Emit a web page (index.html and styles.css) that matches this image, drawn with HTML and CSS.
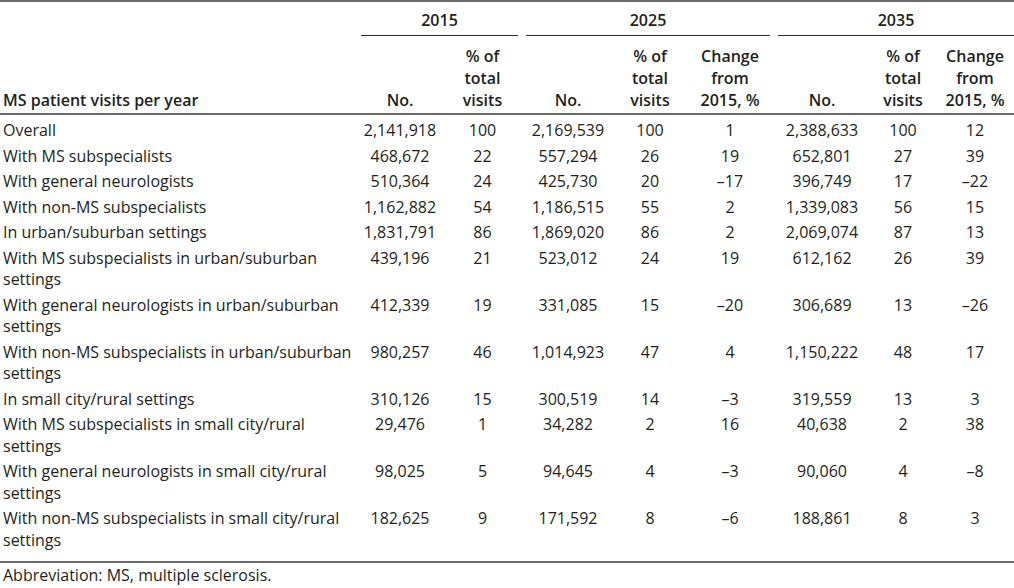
FILE: index.html
```html
<!DOCTYPE html>
<html lang="en">
<head>
<meta charset="utf-8">
<title>MS patient visits per year</title>
<link rel="stylesheet" href="styles.css">
</head>
<body>
<table class="data">
  <colgroup>
    <col class="c-label">
    <col class="c-no15">
    <col class="c-pct15">
    <col class="c-no25">
    <col class="c-pct25">
    <col class="c-ch25">
    <col class="c-no35">
    <col class="c-pct35">
    <col class="c-ch35">
  </colgroup>
  <thead>
    <tr class="h-group">
      <th class="h-label" rowspan="2">MS patient visits per year</th>
      <th class="group" colspan="2"><div class="grp">2015</div></th>
      <th class="group" colspan="3"><div class="grp">2025</div></th>
      <th class="group last" colspan="3"><div class="grp">2035</div></th>
    </tr>
    <tr class="h-cols">
      <th>No.</th>
      <th>% of<br>total<br>visits</th>
      <th>No.</th>
      <th>% of<br>total<br>visits</th>
      <th>Change<br>from<br>2015, %</th>
      <th>No.</th>
      <th>% of<br>total<br>visits</th>
      <th>Change<br>from<br>2015, %</th>
    </tr>
  </thead>
  <tbody>
    <tr>
      <td class="label">Overall</td>
      <td>2,141,918</td><td>100</td>
      <td>2,169,539</td><td>100</td><td>1</td>
      <td>2,388,633</td><td>100</td><td>12</td>
    </tr>
    <tr>
      <td class="label">With MS subspecialists</td>
      <td>468,672</td><td>22</td>
      <td>557,294</td><td>26</td><td>19</td>
      <td>652,801</td><td>27</td><td>39</td>
    </tr>
    <tr>
      <td class="label">With general neurologists</td>
      <td>510,364</td><td>24</td>
      <td>425,730</td><td>20</td><td>–17</td>
      <td>396,749</td><td>17</td><td>–22</td>
    </tr>
    <tr>
      <td class="label">With non-MS subspecialists</td>
      <td>1,162,882</td><td>54</td>
      <td>1,186,515</td><td>55</td><td>2</td>
      <td>1,339,083</td><td>56</td><td>15</td>
    </tr>
    <tr>
      <td class="label">In urban/suburban settings</td>
      <td>1,831,791</td><td>86</td>
      <td>1,869,020</td><td>86</td><td>2</td>
      <td>2,069,074</td><td>87</td><td>13</td>
    </tr>
    <tr>
      <td class="label">With MS subspecialists in urban/suburban<br>settings</td>
      <td>439,196</td><td>21</td>
      <td>523,012</td><td>24</td><td>19</td>
      <td>612,162</td><td>26</td><td>39</td>
    </tr>
    <tr>
      <td class="label">With general neurologists in urban/suburban<br>settings</td>
      <td>412,339</td><td>19</td>
      <td>331,085</td><td>15</td><td>–20</td>
      <td>306,689</td><td>13</td><td>–26</td>
    </tr>
    <tr>
      <td class="label">With non-MS subspecialists in urban/suburban<br>settings</td>
      <td>980,257</td><td>46</td>
      <td>1,014,923</td><td>47</td><td>4</td>
      <td>1,150,222</td><td>48</td><td>17</td>
    </tr>
    <tr>
      <td class="label">In small city/rural settings</td>
      <td>310,126</td><td>15</td>
      <td>300,519</td><td>14</td><td>–3</td>
      <td>319,559</td><td>13</td><td>3</td>
    </tr>
    <tr>
      <td class="label">With MS subspecialists in small city/rural<br>settings</td>
      <td>29,476</td><td>1</td>
      <td>34,282</td><td>2</td><td>16</td>
      <td>40,638</td><td>2</td><td>38</td>
    </tr>
    <tr>
      <td class="label">With general neurologists in small city/rural<br>settings</td>
      <td>98,025</td><td>5</td>
      <td>94,645</td><td>4</td><td>–3</td>
      <td>90,060</td><td>4</td><td>–8</td>
    </tr>
    <tr>
      <td class="label">With non-MS subspecialists in small city/rural<br>settings</td>
      <td>182,625</td><td>9</td>
      <td>171,592</td><td>8</td><td>–6</td>
      <td>188,861</td><td>8</td><td>3</td>
    </tr>
  </tbody>
</table>
<p class="note">Abbreviation: MS, multiple sclerosis.</p>
</body>
</html>
```

FILE: styles.css
```css
html, body {
  margin: 0;
  padding: 0;
  background: #ffffff;
}

body {
  font-family: "Open Sans", "Noto Sans", sans-serif;
  font-size: 16px;
  color: #231f20;
}

.data {
  width: 1014px;
  border-collapse: collapse;
  table-layout: fixed;
  border-top: 2px solid #6a6a6a;
}

.c-label { width: 357px; }
.c-no15 { width: 86px; }
.c-pct15 { width: 79px; }
.c-no25 { width: 92px; }
.c-pct25 { width: 72px; }
.c-ch25 { width: 88px; }
.c-no35 { width: 96px; }
.c-pct35 { width: 66px; }
.c-ch35 { width: 78px; }

th {
  font-weight: 600;
  line-height: 22px;
  text-align: center;
  vertical-align: bottom;
}

.h-group .group {
  padding: 7px 4px 0 4px;
}

.h-group .group.last {
  padding-right: 0;
}

.grp {
  border-bottom: 1px solid #2a2a2a;
  padding-bottom: 4px;
}

.h-label {
  text-align: left;
  padding: 0 4px 2px 3px;
  white-space: nowrap;
}

.h-cols th {
  padding: 9px 4px 2px 4px;
}

tbody {
  border-top: 2px solid #6a6a6a;
  border-bottom: 2px solid #6a6a6a;
}

td {
  line-height: 21.5px;
  padding: 2px 4px;
  text-align: center;
  vertical-align: top;
  white-space: nowrap;
}

td.label {
  text-align: left;
  padding-left: 3px;
}

tbody tr:first-child td {
  padding-top: 5px;
}

tbody tr:last-child td {
  padding-bottom: 9.5px;
}

.note {
  margin: 0;
  padding: 2px 3px;
  line-height: 21.5px;
}
```
